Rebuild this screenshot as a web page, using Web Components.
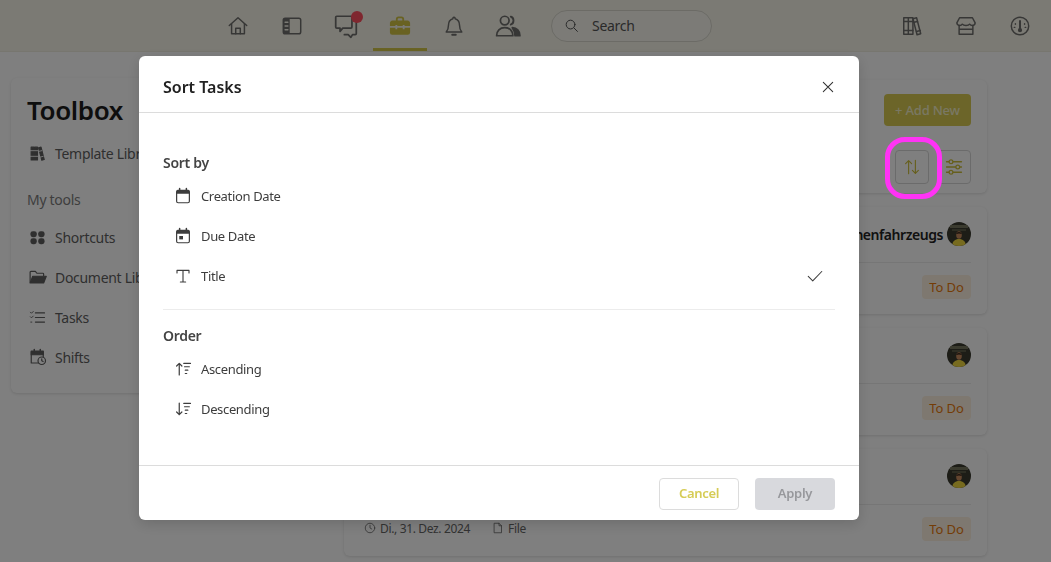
<!DOCTYPE html>
<html>
<head>
<meta charset="utf-8">
<title>Sort Tasks</title>
<style>
  html, body { margin: 0; height: 100%; overflow: hidden; }
  body { background: #fff; font-family: "Noto Sans", "Liberation Sans", sans-serif; }
</style>
</head>
<body>
<app-shell>
  <app-header slot="header"></app-header>
  <tool-box slot="side"></tool-box>
  <task-panel slot="main"></task-panel>
  <task-card slot="main" title-text="Schienenfahrzeugs" date="Di., 31. Dez. 2024"></task-card>
  <task-card slot="main" date="Di., 31. Dez. 2024"></task-card>
  <task-card slot="main" date="Di., 31. Dez. 2024"></task-card>
</app-shell>
<sort-modal></sort-modal>
<highlight-ring></highlight-ring>

<script>
const icons = {
  home: '<path d="M2.500 11.500 12 3l9.500 8.500"/><path d="M5 9.500v11h14v-11"/><path d="M9.500 20.500V14.500h5v6"/>',
  panel: '<rect x="2.500" y="3.500" width="19" height="17" rx="2"/><path d="M3 4h6.500v16H3z" fill="currentColor" stroke="none"/><path d="M4.500 8h3M4.500 12h3M4.500 16h3" stroke="#f7f5ea" stroke-width="1.600"/>',
  chat: '<path d="M3.500 3h13a1 1 0 0 1 1 1v9a1 1 0 0 1-1 1H9l-2.500 3V14h-3a1 1 0 0 1-1-1V4a1 1 0 0 1 1-1z"/><path d="M21.500 8v11a1 1 0 0 1-1 1H18l-1.500 2.500L14 20h-3.500"/>',
  toolbox: '<path d="M8.500 6V4.500a2 2 0 0 1 2-2h3a2 2 0 0 1 2 2V6" fill="none" stroke-width="2"/><path d="M1 9.500a3 3 0 0 1 3-3.500h16a3 3 0 0 1 3 3.500V12h-6v-1h-2v1H9v-1H7v1H1z" fill="currentColor" stroke="none"/><path d="M1 14h6v1.500h2V14h6v1.500h2V14h6v5a2.500 2.500 0 0 1-2.500 2.500h-17A2.500 2.500 0 0 1 1 19z" fill="currentColor" stroke="none"/>',
  bell: '<path d="M12 2.500a1.200 1.200 0 0 1 1.200 1.500C16.500 4.800 18 7.500 18 11c0 4 1 6 2.500 7.500h-17C5 17 6 15 6 11c0-3.500 1.500-6.200 4.800-7A1.200 1.200 0 0 1 12 2.500z"/><path d="M10 21.500h4" stroke-width="2"/>',
  users: '<circle cx="9" cy="7" r="4"/><path d="M1.500 21c0-4.500 3-7.500 7.500-7.500s7.500 3 7.500 7.500z"/><path d="M14.500 3.300a4 4 0 0 1 0 7.400c3.500-.5 3.500-6.900 0-7.400z" fill="currentColor"/><path d="M16 13.500c4 .3 7 3 7 7.500h-4.500c0-3-1-5.500-2.500-7.500z" fill="currentColor"/>',
  search: '<circle cx="10.500" cy="10.500" r="7"/><path d="m16 16 5.500 5.500"/>',
  books: '<path d="M3 3h5v18H3zM8 3h5v18H8z"/><path d="M13 4l4-1 4.500 17.500-4 1z"/><path d="M3 7h10M3 17h10M14 8l4-1M17 18l4-1"/>',
  store: '<path d="M5 3h14l3 5.500c0 1.800-1.500 3-3.300 3-1.400 0-2.200-.8-2.700-1.500-.6.800-1.700 1.500-4 1.500s-3.400-.7-4-1.500c-.5.700-1.300 1.500-2.700 1.500C3.500 11.500 2 10.300 2 8.500z"/><path d="M4.500 11.500V21h15v-9.500M4.500 15.500h15"/>',
  gauge: '<circle cx="12" cy="12" r="9.500"/><path d="M12 6.500v9" stroke-width="2.200"/><circle cx="12" cy="16.500" r="1.500" fill="currentColor"/><path d="M7 9.500v.5M17 9.500v.5M5.800 13.500h.5M17.700 13.500h.5"/>',
  libfill: '<path d="M3 3h4v18H3zM8 3h4v18H8z" fill="currentColor"/><path d="M13.500 4l3.500-1 4.500 17.500-3.500 1z" fill="currentColor"/><path d="M2 8h11M2 16h11M14 9l4-1M16 17l4-1" stroke="#fff" stroke-width="1.200"/>',
  grid: '<g fill="currentColor" stroke="none"><rect x="2" y="3" width="9" height="8.500" rx="3.500"/><rect x="13" y="3" width="9" height="8.500" rx="3.500"/><rect x="2" y="13" width="9" height="8.500" rx="3.500"/><rect x="13" y="13" width="9" height="8.500" rx="3.500"/></g>',
  folder: '<path d="M1.500 19V5.500a1 1 0 0 1 1-1h6l2 2.500h8a1 1 0 0 1 1 1v2"/><path d="M1.500 20 5 11h18l-3.500 9z" fill="currentColor"/>',
  checklist: '<path d="M9 5.500h13M9 12h13M9 18.500h13" stroke-width="1.500"/><path d="m2 4.500 1.500 1.500L6 3.500M2 11l1.500 1.500L6 10M2.500 18.500H4" stroke-width="1.300"/>',
  shifts: '<path d="M3 5h16v15H3z"/><path d="M3 4h16v5H3z" fill="currentColor"/><path d="M7 2v3M15 2v3" stroke-width="2"/><circle cx="17" cy="17" r="5" fill="#fff"/><path d="M17 14.500V17l1.800 1"/>',
  calendar: '<rect x="3.500" y="5" width="17" height="16" rx="2"/><path d="M3 5.500a2 2 0 0 1 2-2h14a2 2 0 0 1 2 2V9H3z" fill="currentColor" stroke="none"/><path d="M7.500 2v3M16.500 2v3" stroke-width="2"/>',
  due: '<rect x="3.500" y="5" width="17" height="16" rx="2"/><path d="M3 5.500a2 2 0 0 1 2-2h14a2 2 0 0 1 2 2V9H3z" fill="currentColor" stroke="none"/><path d="M7.500 2v3M16.500 2v3" stroke-width="2"/><rect x="7" y="12" width="5" height="4.500" fill="currentColor" stroke="none"/>',
  title: '<path d="M4 8V4.500h16V8M12 4.500V20M8.500 20h7"/>',
  asc: '<path d="M7 20V4.500M3.500 8 7 4.500 10.500 8"/><path d="M13 4.500h9M14 9h6.500M15 13.500h3.500M15 18h2" stroke-width="1.500"/>',
  desc: '<path d="M7 4v15.500M3.500 16 7 19.500l3.500-3.500"/><path d="M13 4.500h9M14 9h6.500M15 13.500h3.500M15 18h2" stroke-width="1.500"/>',
  check: '<path d="m3 12.500 6 6L21 6"/>',
  close: '<path d="m5 5 14 14M19 5 5 19"/>',
  sort: '<path d="M7.500 21V3.500M3.500 7.500l4-4 4 4M16.500 3v17.500M12.500 16.500l4 4 4-4"/>',
  sliders: '<path d="M2 5h20M2 12h20M2 19h20"/><circle cx="8" cy="5" r="2.500" fill="#fff"/><circle cx="17" cy="12" r="2.500" fill="#fff"/><circle cx="8" cy="19" r="2.500" fill="#fff"/>',
  clock: '<circle cx="12" cy="12" r="9.500"/><path d="M12 6.500V12l3.500 2"/>',
  file: '<path d="M5 2.500h9l5 5v14H5z"/><path d="M14 2.500v5h5"/>'
}

class SvgIcon extends HTMLElement {
  connectedCallback() {
    const size = this.getAttribute('size') || 20
    const sw = this.getAttribute('stroke') || 1.6
    this.attachShadow({ mode: 'open' }).innerHTML = `
      <style>:host { display: inline-flex; flex: none; width: ${size}px; height: ${size}px; } svg { display: block; width: 100%; height: 100%; }</style>
      <svg viewBox="0 0 24 24" fill="none" stroke="currentColor" stroke-width="${sw}" stroke-linecap="round" stroke-linejoin="round">${icons[this.getAttribute('name')]}</svg>`
  }
}
customElements.define('svg-icon', SvgIcon)

class AppShell extends HTMLElement {
  constructor() {
    super()
    this.attachShadow({ mode: 'open' }).innerHTML = `
      <style>
        :host { display: block; height: 562px; background: #fefefe; overflow: hidden; }
        .body { display: flex; gap: 4px; padding: 26px 64px 0 11px; align-items: flex-start; }
        .side { width: 329px; flex: none; }
        .main { flex: 1; min-width: 0; display: flex; flex-direction: column; gap: 14px; padding-top: 2px; }
      </style>
      <slot name="header"></slot>
      <div class="body">
        <div class="side"><slot name="side"></slot></div>
        <div class="main"><slot name="main"></slot></div>
      </div>`
  }
}
customElements.define('app-shell', AppShell)

class AppHeader extends HTMLElement {
  constructor() {
    super()
    this.attachShadow({ mode: 'open' }).innerHTML = `
      <style>
        :host { display: block; height: 52px; background: #f6f4e8; color: #6e6e6c; box-sizing: border-box; border-bottom: 1px solid #efeddf; }
        .bar { display: flex; align-items: center; height: 51px; padding-left: 211px; }
        .nav { position: relative; width: 54px; height: 51px; display: flex; align-items: center; justify-content: center; }
        .nav.on { color: #d2c445; }
        .nav.on::after { content: ""; position: absolute; left: 0; right: 0; bottom: 0; height: 3px; background: #d3c64a; }
        .dot { position: absolute; right: 10px; top: 11px; width: 12px; height: 12px; border-radius: 50%; background: #ff4e5e; }
        .search { display: flex; align-items: center; box-sizing: border-box; width: 161px; height: 32px; margin-left: 16px; padding-left: 12px; gap: 13px; border: 1px solid #d8d7cd; border-radius: 16px; background: #f8f7ef; font-size: 14px; letter-spacing: -.3px; color: #555; }
        .right { display: flex; margin-left: auto; padding-right: 4px; }
      </style>
      <div class="bar">
        <div class="nav"><svg-icon name="home" size="22"></svg-icon></div>
        <div class="nav"><svg-icon name="panel" size="22"></svg-icon></div>
        <div class="nav"><svg-icon name="chat" size="26"></svg-icon><span class="dot"></span></div>
        <div class="nav on"><svg-icon name="toolbox" size="22"></svg-icon></div>
        <div class="nav"><svg-icon name="bell" size="22"></svg-icon></div>
        <div class="nav"><svg-icon name="users" size="26"></svg-icon></div>
        <div class="search"><svg-icon name="search" size="15"></svg-icon><span>Search</span></div>
        <div class="right">
          <div class="nav"><svg-icon name="books" size="22"></svg-icon></div>
          <div class="nav"><svg-icon name="store" size="22"></svg-icon></div>
          <div class="nav"><svg-icon name="gauge" size="22"></svg-icon></div>
        </div>
      </div>`
  }
}
customElements.define('app-header', AppHeader)

class ToolBox extends HTMLElement {
  constructor() {
    super()
    this.attachShadow({ mode: 'open' }).innerHTML = `
      <style>
        :host { display: block; height: 315px; box-sizing: border-box; padding: 16px 16px; background: #fff; border-radius: 6px; box-shadow: 0 1px 3px rgba(0,0,0,.12); color: #5e5e5e; }
        h1 { margin: 0 0 7px; font-size: 26px; line-height: 32px; font-weight: 600; letter-spacing: -.4px; color: #1c1c1c; }
        .row { display: flex; align-items: center; gap: 9px; height: 40px; font-size: 14px; letter-spacing: -.3px; padding-left: 2px; white-space: nowrap; }
        .label { margin-top: 11px; height: 33px; line-height: 32px; font-size: 14px; letter-spacing: -.3px; color: #7c7c7c; }
        .wide { gap: 8px; }
      </style>
      <h1>Toolbox</h1>
      <div class="row"><svg-icon name="libfill" size="17"></svg-icon>Template Library</div>
      <div class="label">My tools</div>
      <div class="row"><svg-icon name="grid" size="17"></svg-icon>Shortcuts</div>
      <div class="row wide"><svg-icon name="folder" size="18"></svg-icon>Document Library</div>
      <div class="row"><svg-icon name="checklist" size="17"></svg-icon>Tasks</div>
      <div class="row wide"><svg-icon name="shifts" size="18"></svg-icon>Shifts</div>`
  }
}
customElements.define('tool-box', ToolBox)

class TaskPanel extends HTMLElement {
  constructor() {
    super()
    this.attachShadow({ mode: 'open' }).innerHTML = `
      <style>
        :host { display: block; height: 113px; box-sizing: border-box; padding: 14px 16px 0; background: #fff; border-radius: 6px; box-shadow: 0 1px 3px rgba(0,0,0,.12); }
        .row { display: flex; justify-content: flex-end; gap: 8px; }
        .add { width: 87px; height: 32px; display: flex; align-items: center; justify-content: center; border-radius: 4px; background: #d8ca52; color: #f4f0c8; font-size: 13px; font-weight: 500; letter-spacing: -.2px; }
        .tool { width: 34px; height: 34px; box-sizing: border-box; display: flex; align-items: center; justify-content: center; border: 1px solid #d6d6d6; border-radius: 4px; color: #cdbf3a; }
        .row + .row { margin-top: 24px; }
      </style>
      <div class="row"><div class="add">+ Add New</div></div>
      <div class="row">
        <div class="tool"><svg-icon name="sort" size="18" stroke="1.500"></svg-icon></div>
        <div class="tool"><svg-icon name="sliders" size="18" stroke="1.700"></svg-icon></div>
      </div>`
  }
}
customElements.define('task-panel', TaskPanel)

class TaskCard extends HTMLElement {
  connectedCallback() {
    const title = this.getAttribute('title-text') || ''
    const date = this.getAttribute('date') || ''
    this.attachShadow({ mode: 'open' }).innerHTML = `
      <style>
        :host { display: block; height: 107px; box-sizing: border-box; padding: 15px 16px 0 20px; background: #fff; border-radius: 6px; box-shadow: 0 1px 3px rgba(0,0,0,.12); color: #666; }
        .top { display: flex; justify-content: flex-end; align-items: center; gap: 4px; height: 24px; padding-bottom: 16px; border-bottom: 1px solid #ececec; font-size: 14px; font-weight: 600; letter-spacing: -.45px; color: #222; white-space: nowrap; }
        .avatar { width: 24px; height: 24px; flex: none; border-radius: 50%; overflow: hidden; }
        .bottom { display: flex; align-items: flex-start; justify-content: space-between; margin-top: 12px; }
        .meta { display: flex; align-items: center; gap: 4px; font-size: 12px; letter-spacing: -.35px; margin-top: 2px; height: 18px; }
        .meta svg-icon + span + svg-icon { margin-left: 18px; }
        .badge { width: 49px; height: 24px; line-height: 24px; text-align: center; border-radius: 4px; background: #fdf1e0; color: #e8790c; font-size: 13px; letter-spacing: -.1px; }
      </style>
      <div class="top">
        <span>${title}</span>
        <div class="avatar">
          <svg viewBox="0 0 24 24" width="24" height="24">
            <rect width="24" height="24" fill="#3a3a2e"/>
            <rect x="3" y="3" width="18" height="3" fill="#77765f"/>
            <rect x="5" y="7" width="14" height="2" fill="#5a5a46"/>
            <path d="M5 24c.5-5 3-7 7-7s6.500 2 7 7z" fill="#eed63f"/>
            <ellipse cx="12" cy="13" rx="2.800" ry="3.800" fill="#c78a5e"/>
            <path d="M9.200 12c0-2.800 5.600-2.800 5.600 0-1.800-.8-3.800-.8-5.600 0z" fill="#33231a"/>
          </svg>
        </div>
      </div>
      <div class="bottom">
        <div class="meta">
          <svg-icon name="clock" size="12"></svg-icon><span>${date}</span>
          <svg-icon name="file" size="12"></svg-icon><span>File</span>
        </div>
        <div class="badge">To Do</div>
      </div>`
  }
}
customElements.define('task-card', TaskCard)

class SortOption extends HTMLElement {
  connectedCallback() {
    const on = this.hasAttribute('checked')
    this.attachShadow({ mode: 'open' }).innerHTML = `
      <style>
        :host { display: flex; align-items: center; height: 40px; padding: 0 11px 0 11px; gap: 9px; font-size: 13px; letter-spacing: -.35px; color: #3d3d3d; }
        .t { flex: 1; }
      </style>
      <svg-icon name="${this.getAttribute('icon')}" size="18" stroke="${this.getAttribute('stroke') || 1.6}"></svg-icon>
      <span class="t"><slot></slot></span>
      ${on ? '<svg-icon name="check" size="18" stroke="1.400"></svg-icon>' : ''}`
  }
}
customElements.define('sort-option', SortOption)

class SortModal extends HTMLElement {
  constructor() {
    super()
    this.attachShadow({ mode: 'open' }).innerHTML = `
      <style>
        :host { position: fixed; inset: 0; display: block; background: rgba(0,0,0,.5); }
        .box { position: absolute; left: 139px; top: 56px; width: 720px; height: 464px; display: flex; flex-direction: column; background: #fff; border-radius: 6px; box-shadow: 0 4px 14px rgba(0,0,0,.15); color: #333; }
        header { display: flex; align-items: center; justify-content: space-between; height: 57px; box-sizing: border-box; padding: 5px 24px 0; border-bottom: 1px solid #dcdcdc; }
        h2 { margin: 0; font-size: 16px; font-weight: 600; color: #222; }
        .close { display: flex; color: #333; margin-right: -1px; }
        .content { flex: 1; padding: 40px 24px 0; }
        h3 { margin: 0 0 3px; font-size: 14px; line-height: 20px; font-weight: 600; letter-spacing: -.3px; color: #444; }
        .group { padding-bottom: 13px; }
        .group + .group { border-top: 1px solid #ececec; padding-top: 16px; }
        footer { display: flex; justify-content: flex-end; gap: 16px; height: 55px; padding: 12px 24px 0; box-sizing: border-box; border-top: 1px solid #dcdcdc; }
        button { width: 80px; height: 32px; border-radius: 4px; font: 600 13px "Noto Sans", "Liberation Sans", sans-serif; letter-spacing: -.3px; padding: 0 0 2px; }
        .cancel { background: #fff; border: 1px solid #dcdcdc; color: #d6cc55; }
        .apply { background: #d8d9dd; border: 0; color: #97989c; }
      </style>
      <div class="box">
        <header><h2>Sort Tasks</h2><span class="close"><svg-icon name="close" size="16" stroke="1.600"></svg-icon></span></header>
        <div class="content">
          <div class="group">
            <h3>Sort by</h3>
            <sort-option icon="calendar">Creation Date</sort-option>
            <sort-option icon="due">Due Date</sort-option>
            <sort-option icon="title" stroke="1.500" checked>Title</sort-option>
          </div>
          <div class="group">
            <h3>Order</h3>
            <sort-option icon="asc">Ascending</sort-option>
            <sort-option icon="desc">Descending</sort-option>
          </div>
        </div>
        <footer><button class="cancel">Cancel</button><button class="apply">Apply</button></footer>
      </div>`
  }
}
customElements.define('sort-modal', SortModal)

class HighlightRing extends HTMLElement {
  constructor() {
    super()
    this.attachShadow({ mode: 'open' }).innerHTML = `
      <style>
        :host { position: fixed; left: 885px; top: 137px; width: 57px; height: 62px; box-sizing: border-box; border: 5px solid #ff33f5; border-radius: 20px; }
      </style>`
  }
}
customElements.define('highlight-ring', HighlightRing)
</script>
</body>
</html>
